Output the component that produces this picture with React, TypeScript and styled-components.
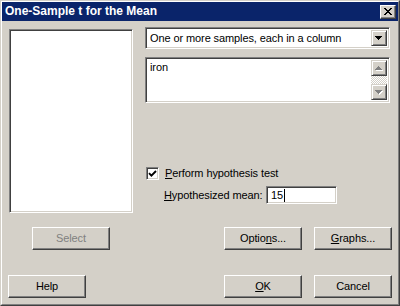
import React from "react";
import styled, { createGlobalStyle } from "styled-components";

const FACE = "#d4d0c8";
const SHADOW = "#808080";
const DARK = "#404040";
const FONT = `"Liberation Sans", Arial, sans-serif`;

const Global = createGlobalStyle`
  html, body { margin: 0; padding: 0; background: ${FACE}; }
  body { font-family: ${FONT}; font-size: 11px; color: #000; letter-spacing: -0.1px; }
  * { box-sizing: border-box; }
`;

const Window = styled.div`
  width: 400px;
  height: 306px;
  border: 1px solid;
  border-color: ${FACE} ${DARK} ${DARK} ${FACE};
  background: ${FACE};
  display: flex;
`;

const Frame = styled.div`
  flex: 1;
  border: 1px solid;
  border-color: #fff ${SHADOW} ${SHADOW} #fff;
  display: flex;
  flex-direction: column;
`;

const TitleBar = styled.div`
  height: 19px;
  background: #0a246a;
  display: flex;
  align-items: center;
  justify-content: space-between;
  padding: 0 2px 0 3px;
`;

const TitleText = styled.span`
  color: #fff;
  font-weight: bold;
  font-size: 12px;
  letter-spacing: 0;
  font-family: ${FONT};
  line-height: 19px;
`;

const Raised = styled.div`
  background: ${FACE};
  border: 1px solid;
  border-color: #fff ${DARK} ${DARK} #fff;
  box-shadow: inset -1px -1px 0 ${SHADOW};
  display: flex;
  align-items: center;
  justify-content: center;
`;

const CloseButton = styled(Raised)`
  width: 16px;
  height: 14px;
  padding: 0 1px 1px 0;
`;

const Client = styled.div`
  padding: 6px 6px 0 6px;
  display: flex;
  flex-direction: column;
`;

const Row = styled.div<{ $top?: number }>`
  display: grid;
  grid-template-columns: 126px 247px;
  column-gap: 11px;
  margin-top: ${(p) => p.$top ?? 0}px;
`;

const Sunken = styled.div`
  background: #fff;
  border: 1px solid;
  border-color: ${SHADOW} #fff #fff ${SHADOW};
  box-shadow: inset 1px 1px 0 ${DARK}, inset -1px -1px 0 ${FACE};
`;

const ListBox = styled(Sunken)`
  width: 124px;
  height: 184px;
  margin: 2px 0 0 1px;
`;

const RightPane = styled.div`
  display: flex;
  flex-direction: column;
`;

const Combo = styled(Sunken)`
  width: 245px;
  height: 22px;
  display: flex;
  align-items: stretch;
  padding: 2px;
`;

const ComboText = styled.div`
  flex: 1;
  padding-left: 2px;
  line-height: 17px;
  white-space: nowrap;
`;

const ComboButton = styled(Raised)`
  width: 16px;
  border-color: ${FACE} ${DARK} ${DARK} ${FACE};
  box-shadow: inset 1px 1px 0 #fff, inset -1px -1px 0 ${SHADOW};
`;

const MemoBox = styled(Sunken)`
  width: 245px;
  height: 46px;
  margin-top: 8px;
  display: flex;
  padding: 2px;
`;

const MemoText = styled.div`
  flex: 1;
  padding: 1px 2px;
  line-height: 13px;
`;

const ScrollBar = styled.div`
  width: 16px;
  display: flex;
  flex-direction: column;
`;

const ScrollButton = styled(ComboButton)`
  height: 16px;
`;

const ScrollTrack = styled.div`
  flex: 1;
  background: repeating-conic-gradient(#fff 0 25%, ${FACE} 0 50%) 0 0 / 2px 2px;
`;

const CheckRow = styled.label`
  display: flex;
  align-items: center;
  height: 13px;
  margin-top: 64px;
`;

const CheckBox = styled(Sunken)`
  width: 13px;
  height: 13px;
  margin-left: 1px;
  display: flex;
  align-items: center;
  justify-content: center;
`;

const CheckLabel = styled.span`
  margin-left: 6px;
  line-height: 13px;
`;

const FieldRow = styled.div`
  display: flex;
  align-items: center;
  margin-top: 6px;
  padding-left: 19px;
`;

const FieldLabel = styled.span`
  width: 102px;
  white-space: nowrap;
`;

const Edit = styled(Sunken)`
  width: 71px;
  height: 18px;
  padding: 2px 4px;
  display: flex;
  align-items: center;
  line-height: 13px;
`;

const Caret = styled.span`
  display: inline-block;
  width: 1px;
  height: 13px;
  background: #000;
  margin-left: 1px;
`;

const Button = styled(Raised)<{ $disabled?: boolean }>`
  width: 78px;
  height: 23px;
  font-size: 11px;
  color: ${(p) => (p.$disabled ? SHADOW : "#000")};
  padding-bottom: 1px;
  white-space: nowrap;
`;

const LeftCell = styled.div<{ $align: string }>`
  display: flex;
  justify-content: ${(p) => p.$align};
`;

const RightCell = styled.div`
  display: flex;
  justify-content: flex-end;
  gap: 12px;
`;

const Key = styled.span`
  text-decoration: underline;
`;

const CloseGlyph = () => {
  const px: [number, number][] = [
    [0, 0], [1, 0], [6, 0], [7, 0],
    [1, 1], [2, 1], [5, 1], [6, 1],
    [2, 2], [3, 2], [4, 2], [5, 2],
    [3, 3], [4, 3],
    [2, 4], [3, 4], [4, 4], [5, 4],
    [1, 5], [2, 5], [5, 5], [6, 5],
    [0, 6], [1, 6], [6, 6], [7, 6],
  ];
  return (
    <svg width="8" height="7" viewBox="0 0 8 7" shapeRendering="crispEdges">
      {px.map(([x, y]) => (
        <rect key={`${x}-${y}`} x={x} y={y} width="1" height="1" fill="#000" />
      ))}
    </svg>
  );
};

const Arrow = ({ dir, color, shadow }: { dir: "up" | "down"; color: string; shadow?: string }) => {
  const pts = dir === "down" ? "0,0 7,0 3.5,4" : "3.5,0 7,4 0,4";
  return (
    <svg width="8" height="5" viewBox="0 0 8 5" shapeRendering="crispEdges">
      {shadow && <polygon points={pts} fill={shadow} transform="translate(1,1)" />}
      <polygon points={pts} fill={color} />
    </svg>
  );
};

const CheckMark = () => (
  <svg width="9" height="9" viewBox="0 0 9 9">
    <path d="M1 4.2 L3.4 6.6 L8 2" fill="none" stroke="#000" strokeWidth="1.9" />
  </svg>
);

export default function App() {
  return (
    <>
      <Global />
      <Window>
        <Frame>
          <TitleBar>
            <TitleText>One-Sample t for the Mean</TitleText>
            <CloseButton>
              <CloseGlyph />
            </CloseButton>
          </TitleBar>
          <Client>
            <Row>
              <ListBox />
              <RightPane>
                <Combo>
                  <ComboText>One or more samples, each in a column</ComboText>
                  <ComboButton>
                    <Arrow dir="down" color="#000" />
                  </ComboButton>
                </Combo>
                <MemoBox>
                  <MemoText>iron</MemoText>
                  <ScrollBar>
                    <ScrollButton>
                      <Arrow dir="up" color={SHADOW} shadow="#fff" />
                    </ScrollButton>
                    <ScrollTrack />
                    <ScrollButton>
                      <Arrow dir="down" color={SHADOW} shadow="#fff" />
                    </ScrollButton>
                  </ScrollBar>
                </MemoBox>
                <CheckRow>
                  <CheckBox>
                    <CheckMark />
                  </CheckBox>
                  <CheckLabel>
                    <Key>P</Key>erform hypothesis test
                  </CheckLabel>
                </CheckRow>
                <FieldRow>
                  <FieldLabel>
                    <Key>H</Key>ypothesized mean:
                  </FieldLabel>
                  <Edit>
                    15
                    <Caret />
                  </Edit>
                </FieldRow>
              </RightPane>
            </Row>
            <Row $top={14}>
              <LeftCell $align="center">
                <Button $disabled>Select</Button>
              </LeftCell>
              <RightCell>
                <Button>
                  Optio<Key>n</Key>s...
                </Button>
                <Button>
                  <Key>G</Key>raphs...
                </Button>
              </RightCell>
            </Row>
            <Row $top={25}>
              <LeftCell $align="flex-start">
                <Button>Help</Button>
              </LeftCell>
              <RightCell>
                <Button>
                  <Key>O</Key>K
                </Button>
                <Button>Cancel</Button>
              </RightCell>
            </Row>
          </Client>
        </Frame>
      </Window>
    </>
  );
}
